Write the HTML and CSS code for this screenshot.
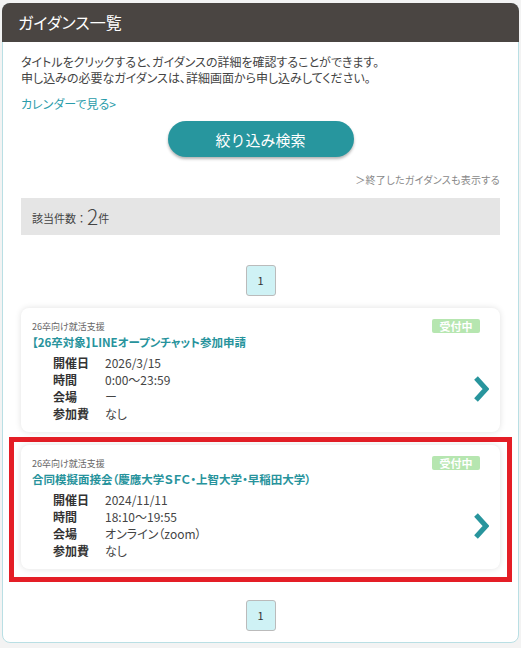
FILE: index.html
```html
<!DOCTYPE html>
<html>
<head>
<meta name="viewport" content="width=device-width, initial-scale=1">
<link rel="stylesheet" href="styles.css">
</head>
<body>

<div class="panel">
  <div class="panel-head">ガイダンス一覧</div>

  <div class="panel-body">
    <p class="lead">タイトルをクリックすると、ガイダンスの詳細を確認することができます。<br>申し込みの必要なガイダンスは、詳細画面から申し込みしてください。</p>
    <a href="#" class="cal-link">カレンダーで見る&gt;</a>

    <div class="search-wrap">
      <button type="button" class="search-btn">絞り込み検索</button>
    </div>

    <div class="past-link"><a href="#">＞終了したガイダンスも表示する</a></div>

    <div class="count">該当件数：<span class="count-num">2</span>件</div>

    <div class="pager"><span class="page">1</span></div>

    <!-- guidance list -->
    <div class="card">
      <div class="card-top">
        <span class="category">26卒向け就活支援</span>
        <span class="badge">受付中</span>
      </div>
      <a href="#" class="card-title">【26卒対象】LINEオープンチャット参加申請</a>
      <div class="card-main">
        <dl class="info">
          <dt>開催日</dt><dd>2026/3/15</dd>
          <dt>時間</dt><dd>0:00〜23:59</dd>
          <dt>会場</dt><dd>ー</dd>
          <dt>参加費</dt><dd>なし</dd>
        </dl>
        <svg class="chevron" width="16" height="28" viewBox="0 0 16 28"><polyline points="3,3 13,14 3,25" fill="none" stroke="#28959d" stroke-width="5"/></svg>
      </div>
    </div>

    <div class="highlight">
      <div class="card">
        <div class="card-top">
          <span class="category">26卒向け就活支援</span>
          <span class="badge">受付中</span>
        </div>
        <a href="#" class="card-title">合同模擬面接会（慶應大学ＳＦＣ・上智大学・早稲田大学）</a>
        <div class="card-main">
          <dl class="info">
            <dt>開催日</dt><dd>2024/11/11</dd>
            <dt>時間</dt><dd>18:10〜19:55</dd>
            <dt>会場</dt><dd>オンライン（zoom）</dd>
            <dt>参加費</dt><dd>なし</dd>
          </dl>
          <svg class="chevron" width="16" height="28" viewBox="0 0 16 28"><polyline points="3,3 13,14 3,25" fill="none" stroke="#28959d" stroke-width="5"/></svg>
        </div>
      </div>
    </div>

    <div class="pager pager-bottom"><span class="page">1</span></div>
  </div>
</div>

</body>
</html>
```

FILE: styles.css
```css
body {
    margin: 0;
    padding: 3px 2px 0 2px;
    background-color: #f3f3f3;
    font-family: "Noto Sans CJK JP", "DejaVu Sans", sans-serif;
    font-feature-settings: "palt";
    color: #444;
}

a {
    text-decoration: none;
}

/* Outer panel */
.panel {
    width: 515px;
    border: 1px solid #b9dfe4;
    border-radius: 8px;
    background-color: #fff;
}

.panel-head {
    margin: -1px -1px 0 -1px;
    height: 39px;
    line-height: 39px;
    padding-left: 16px;
    background-color: #4a4542;
    border-radius: 8px 8px 0 0;
    color: #fff;
    font-size: 16px;
}

.panel-body {
    padding: 12px 18px 11px 18px;
}

.lead {
    margin: 0;
    font-size: 12px;
    line-height: 16px;
}

.cal-link {
    display: block;
    margin-top: 10px;
    font-size: 12px;
    line-height: 16px;
    color: #2a9caa;
}

/* Search button */
.search-wrap {
    margin-top: 9px;
    text-align: center;
}

.search-btn {
    width: 186px;
    height: 36px;
    border: none;
    border-radius: 18px;
    background-color: #27969e;
    box-shadow: 0 2px 3px rgba(0,0,0,0.3);
    color: #fff;
    font-family: inherit;
    font-size: 15px;
    cursor: pointer;
}

.past-link {
    margin-top: 15px;
    text-align: right;
    font-size: 10px;
    line-height: 16px;
    letter-spacing: 0.3px;
}

.past-link a {
    color: #888;
}

/* Hit count */
.count {
    margin-top: 10px;
    height: 37px;
    line-height: 37px;
    padding-left: 11px;
    background-color: #e5e5e5;
    font-size: 11px;
    font-feature-settings: normal;
    color: #444;
}

.count-num {
    font-size: 21px;
    font-weight: 300;
    vertical-align: -2px;
}

/* Paging */
.pager {
    margin-top: 30px;
    display: flex;
    justify-content: center;
}

.pager-bottom {
    margin-top: 18px;
}

.page {
    width: 28px;
    height: 29px;
    line-height: 29px;
    text-align: center;
    border: 1px solid #bbb;
    border-radius: 3px;
    background-color: #cff2f5;
    font-size: 11px;
    color: #333;
}

/* Guidance card */
.card {
    margin-top: 12px;
    padding: 11px 11px 10px 11px;
    border-radius: 8px;
    background-color: #fff;
    box-shadow: 0 0 6px rgba(0,0,0,0.12);
}

.card-top {
    display: flex;
    justify-content: space-between;
    align-items: center;
    height: 14px;
}

.category {
    font-size: 9px;
    color: #666;
}

.badge {
    width: 48px;
    height: 14px;
    line-height: 14px;
    margin-right: 9px;
    text-align: center;
    border-radius: 2px;
    background-color: #b6e6b0;
    color: #fff;
    font-size: 11px;
    font-weight: bold;
}

.card-title {
    display: block;
    font-size: 11.5px;
    line-height: 18px;
    font-weight: bold;
    color: #27939c;
}

.card-main {
    margin-top: 3px;
    display: flex;
    align-items: center;
    justify-content: space-between;
}

.info {
    margin: 0 0 0 21px;
    display: grid;
    grid-template-columns: 52px auto;
    font-size: 12px;
    line-height: 17px;
}

.info dt {
    font-weight: bold;
    color: #333;
}

.info dd {
    margin: 0;
    color: #444;
}

.chevron {
    display: block;
    margin-top: 2px;
}

/* Highlighted item */
.highlight {
    margin: 5px -12px 0 -12px;
    padding: 3px 7px 8px 7px;
    border: 5px solid #e41e26;
}

.highlight .card {
    margin-top: 0;
}
```
